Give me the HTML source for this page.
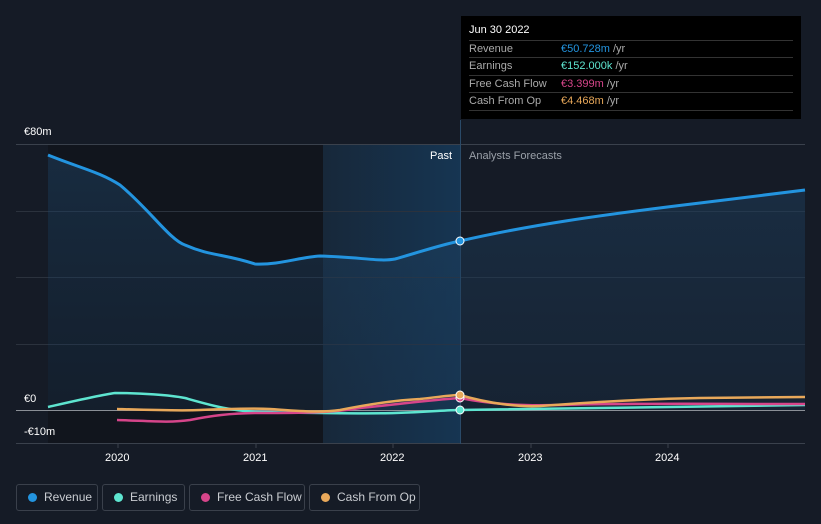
<!DOCTYPE html><html><head><style>
body{margin:0;width:821px;height:524px;background:#151b26;font-family:"Liberation Sans",sans-serif;overflow:hidden;position:relative}
.t{position:absolute;color:#fff;font-size:11px}
.lg{position:absolute;top:484px;height:27px;border:1px solid #3a404b;border-radius:3px;box-sizing:border-box;color:#c9ccd1;font-size:12px;line-height:25px;padding-left:27px}
.lg i{position:absolute;left:11px;top:8px;width:9px;height:9px;border-radius:50%}
.tip{position:absolute;left:461px;top:16px;width:340px;height:103px;background:#000}
.tip div{position:absolute;left:8px;width:324px;font-size:11px;color:#aaa}
.tip .r{border-top:1px solid #333;height:17px;line-height:17px}
.tip span{position:absolute;left:92px}
</style></head><body>
<svg width="821" height="524" style="position:absolute;left:0;top:0">
<defs><linearGradient id="hl" x1="0" x2="1"><stop offset="0" stop-color="#17283a"/><stop offset="1" stop-color="#163552"/></linearGradient>
<linearGradient id="rf" x1="0" y1="0" x2="0" y2="1"><stop offset="0" stop-color="#1f4466" stop-opacity=".8"/><stop offset="1" stop-color="#1a3550" stop-opacity=".5"/></linearGradient></defs>
<rect x="48" y="144" width="275" height="300" fill="#11151d"/>
<rect x="323" y="144" width="138" height="300" fill="url(#hl)"/>
<g stroke="#2b323d" stroke-width="1"><line x1="16" y1="144.5" x2="805" y2="144.5" stroke="#3a414c"/><line x1="16" y1="211.5" x2="805" y2="211.5"/><line x1="16" y1="277.5" x2="805" y2="277.5"/><line x1="16" y1="344.5" x2="805" y2="344.5"/><line x1="16" y1="443.5" x2="805" y2="443.5" stroke="#3a414c"/></g>
<line x1="460.5" y1="120" x2="460.5" y2="444" stroke="#2a4a68"/>
<path d="M48,155 C80,168 100,172 120,185 C150,210 170,240 185,245 C210,256 225,254 255,264 C280,265 300,257 320,256 C360,257 380,262 395,259 C420,252 440,245 460,241 C530,225 600,215 700,203 L805,190 L805,410 L48,410Z" fill="url(#rf)" opacity=".6"/>
<path d="M48,155 C80,168 100,172 120,185 C150,210 170,240 185,245 C210,256 225,254 255,264 C280,265 300,257 320,256 C360,257 380,262 395,259 C420,252 440,245 460,241 C530,225 600,215 700,203 L805,190" fill="none" stroke="#2394df" stroke-width="3"/>
<line x1="16" y1="410.5" x2="805" y2="410.5" stroke="#8a8f96"/>
<path d="M48,407 C70,402 100,395 115,393 C140,393 170,395 185,398 C210,405 230,411 260,412 C320,413 360,414 395,413 C430,412 445,410 460,410 L805,405" fill="none" stroke="#5ee5d0" stroke-width="2.5"/>
<path d="M117,420 C150,421 170,423 190,420 C210,416 230,413 260,413 C300,413 330,413 360,408 C400,404 430,400 460,398 C490,404 520,406 560,405 C620,403 700,404 805,404" fill="none" stroke="#d6458a" stroke-width="2.5"/>
<path d="M117,409 C150,410 180,411 200,410 C230,409 250,408 270,409 C300,411 320,413 340,410 C370,404 400,400 420,399 C440,397 450,395 460,395 C490,404 520,407 540,406 C580,403 640,399 700,398 L805,397" fill="none" stroke="#e8a85a" stroke-width="2.5"/>
<circle cx="460" cy="241" r="4" fill="#2394df" stroke="#fff" stroke-width="1"/>
<circle cx="460" cy="398" r="4" fill="#d6458a" stroke="#fff" stroke-width="1"/>
<circle cx="460" cy="395" r="4" fill="#e8a85a" stroke="#fff" stroke-width="1"/>
<circle cx="460" cy="410" r="4" fill="#5ee5d0" stroke="#fff" stroke-width="1"/>
<g stroke="#3a414c"><line x1="118" y1="444" x2="118" y2="448"/><line x1="256" y1="444" x2="256" y2="448"/><line x1="393" y1="444" x2="393" y2="448"/><line x1="531" y1="444" x2="531" y2="448"/><line x1="668" y1="444" x2="668" y2="448"/></g>
</svg>
<div class="t" style="left:24px;top:126px">€80m</div>
<div class="t" style="left:24px;top:393px">€0</div>
<div class="t" style="left:24px;top:426px">-€10m</div>
<div class="t" style="left:430px;top:150px">Past</div>
<div class="t" style="left:469px;top:150px;color:#9aa0a8">Analysts Forecasts</div>
<div class="t" style="left:105px;top:452px">2020</div>
<div class="t" style="left:243px;top:452px">2021</div>
<div class="t" style="left:380px;top:452px">2022</div>
<div class="t" style="left:518px;top:452px">2023</div>
<div class="t" style="left:655px;top:452px">2024</div>
<div class="tip">
<div style="top:8px;color:#fff">Jun 30 2022</div>
<div class="r" style="top:24px">Revenue<span style="color:#2394df">€50.728m <b style="font-weight:normal;color:#aaa">/yr</b></span></div>
<div class="r" style="top:41px">Earnings<span style="color:#5ee5d0">€152.000k <b style="font-weight:normal;color:#aaa">/yr</b></span></div>
<div class="r" style="top:59px">Free Cash Flow<span style="color:#d6458a">€3.399m <b style="font-weight:normal;color:#aaa">/yr</b></span></div>
<div class="r" style="top:76px">Cash From Op<span style="color:#e8a85a">€4.468m <b style="font-weight:normal;color:#aaa">/yr</b></span></div>
<div style="top:94px;border-top:1px solid #333"></div>
</div>
<div class="lg" style="left:16px;width:82px"><i style="background:#2394df"></i>Revenue</div>
<div class="lg" style="left:102px;width:83px"><i style="background:#5ee5d0"></i>Earnings</div>
<div class="lg" style="left:189px;width:116px"><i style="background:#d6458a"></i>Free Cash Flow</div>
<div class="lg" style="left:309px;width:111px"><i style="background:#e8a85a"></i>Cash From Op</div>
</body></html>
